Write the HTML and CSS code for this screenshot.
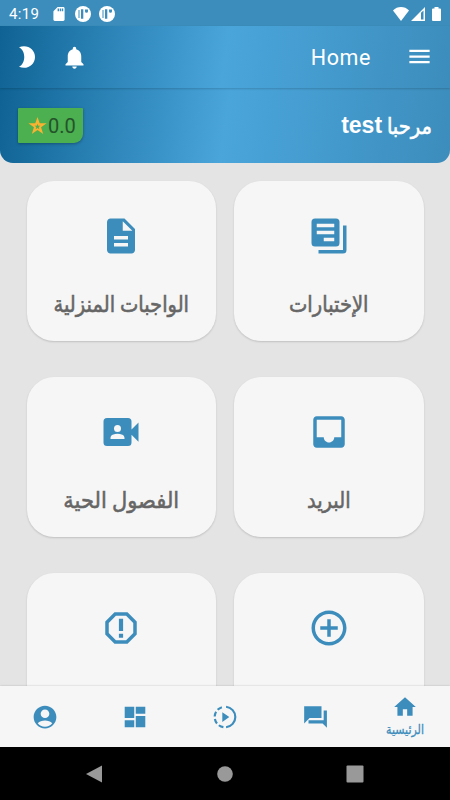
FILE: index.html
```html
<!DOCTYPE html>
<html lang="ar">
<head>
  <meta charset="UTF-8" />
  <meta name="viewport" content="width=device-width, initial-scale=1" />
  <title>Home</title>
  <link rel="stylesheet" href="styles.css">
</head>
<body>

  <div class="statusbar">
    <span class="clock">4:19</span>
    <svg class="sd" viewBox="4 2 16 20"><path d="M18 2h-8L4.020 8 4 20c0 1.100.9 2 2 2h12c1.100 0 2-.9 2-2V4c0-1.100-.9-2-2-2zm-6 6h-2V4h2v4zm3 0h-2V4h2v4zm3 0h-2V4h2v4z"/></svg>
    <svg class="notif" viewBox="0 0 16 16"><circle cx="8" cy="8" r="8"/><path class="cut" d="M3.500 4h1v8h-1zM6 3.200h2.300v9.600H6zM10 3.500h3v1.800q0 1.500-1.500 1.500T10 5.300z"/></svg>
    <svg class="notif" viewBox="0 0 16 16"><circle cx="8" cy="8" r="8"/><path class="cut" d="M3.500 4h1v8h-1zM6 3.200h2.300v9.600H6zM10 3.500h3v1.800q0 1.500-1.500 1.500T10 5.300z"/></svg>
    <div class="signals">
      <svg class="wifi" viewBox="0 0 16 14"><path d="M8 14L0 3.400C2.200 1.200 5 0 8 0s5.800 1.200 8 3.400z"/></svg>
      <svg class="cell" viewBox="0 0 14 14"><path fill-rule="evenodd" d="M14 0v14H0zM10 5.800V12.500h2.500V3.500z"/></svg>
      <svg class="battery" viewBox="0 0 9 14"><path d="M2.500 0h4v1.500H8q1 0 1 1V13q0 1-1 1H1q-1 0-1-1V2.500q0-1 1-1h1.500z"/></svg>
    </div>
  </div>

  <header class="appbar">
    <svg class="moon" viewBox="0 0 16 22"><path d="M0 1.200C8-2.200 16 3 16 11S8 24.200 0 20.800C7 17.500 7 4.500 0 1.200z"/></svg>
    <svg class="bell" viewBox="0 0 24 24"><path d="M12 22c1.100 0 2-.9 2-2h-4c0 1.100.89 2 2 2zm6-6v-5c0-3.070-1.640-5.640-4.500-6.320V4c0-.83-.67-1.500-1.500-1.500s-1.500.67-1.500 1.500v.68C7.630 5.360 6 7.920 6 11v5l-2 2v1h16v-1l-2-2z"/></svg>
    <h1>Home</h1>
    <svg class="menu" viewBox="0 0 24 24"><path d="M3 18h18v-2H3v2zm0-5h18v-2H3v2zm0-7v2h18V6H3z"/></svg>
  </header>

  <section class="welcome">
    <div class="rating">
      <svg viewBox="0 0 24 24"><path fill-rule="evenodd" d="M12 .5l2.800 8.100h8.700l-7 5.100 2.700 8.300L12 17l-7.200 5 2.700-8.300-7-5.100h8.700zM12 9l-.9 2.700H8.300l2.200 1.700-.8 2.700 2.300-1.600 2.300 1.600-.8-2.700 2.200-1.700h-2.800z"/></svg>
      <span>0.0</span>
    </div>
    <p class="greeting" dir="rtl"><span class="hello">مرحبا</span> <b>test</b></p>
  </section>

  <main class="grid" dir="rtl">
    <a class="card">
      <svg viewBox="0 0 24 24"><path fill-rule="evenodd" d="M4 2h12a2 2 0 0 1 2 2v12a2 2 0 0 1-2 2H4a2 2 0 0 1-2-2V4a2 2 0 0 1 2-2zM5 5v2h10V5zM5 9v2h10V9zM9 13v2h6v-2zM20 6h2v14a2 2 0 0 1-2 2H6v-2h14z"/></svg>
      <span class="label">الإختبارات</span>
    </a>
    <a class="card">
      <svg viewBox="0 0 24 24"><path d="M14 2H6c-1.100 0-1.990.9-1.990 2L4 20c0 1.100.89 2 1.990 2H18c1.100 0 2-.9 2-2V8l-6-6zm2 16H8v-2h8v2zm0-4H8v-2h8v2zm-3-5V3.500L18.500 9H13z"/></svg>
      <span class="label">الواجبات المنزلية</span>
    </a>
    <a class="card">
      <svg viewBox="0 0 24 24"><path d="M19 3H4.990C3.880 3 3.010 3.890 3.010 5L3 19c0 1.100.88 2 1.990 2H19c1.100 0 2-.9 2-2V5c0-1.110-.9-2-2-2zm0 12h-4c0 1.660-1.350 3-3 3s-3-1.340-3-3H4.990V5H19v10z"/></svg>
      <span class="label">البريد</span>
    </a>
    <a class="card">
      <svg viewBox="0 0 24 24"><path fill-rule="evenodd" d="M18 10.500V6a2 2 0 0 0-2-2H4a2 2 0 0 0-2 2v12a2 2 0 0 0 2 2h12a2 2 0 0 0 2-2v-4.500l4 4v-11zM10 8a2 2 0 1 1 0 4 2 2 0 0 1 0-4zM14 16H6v-.57c0-.81.48-1.530 1.220-1.850a6.950 6.950 0 0 1 5.560 0c.74.32 1.220 1.040 1.220 1.850z"/></svg>
      <span class="label wide">الفصول الحية</span>
    </a>
    <a class="card">
      <svg viewBox="0 0 24 24"><path d="M13 7h-2v4H7v2h4v4h2v-4h4v-2h-4V7zm-1-5C6.480 2 2 6.480 2 12s4.480 10 10 10 10-4.480 10-10S17.520 2 12 2zm0 18c-4.410 0-8-3.590-8-8s3.590-8 8-8 8 3.590 8 8-3.590 8-8 8z"/></svg>
    </a>
    <a class="card">
      <svg viewBox="0 0 24 24"><path d="M15.730 3H8.270L3 8.270v7.460L8.270 21h7.460L21 15.730V8.270L15.730 3zM19 14.900L14.900 19H9.100L5 14.900V9.100L9.100 5h5.800L19 9.100v5.800zM10.800 15.300h2.400v2.300h-2.400zM10.800 6.700h2.400v7h-2.400z"/></svg>
    </a>
  </main>

  <nav class="tabs" dir="rtl">
    <a class="active">
      <svg viewBox="0 0 24 24"><path d="M10 20v-6h4v6h5v-8h3L12 3 2 12h3v8z"/></svg>
      <span>الرئيسية</span>
    </a>
    <a><svg viewBox="0 0 24 24"><path d="M23 6h-3v9H6v3h13l4 4zM18 13V2H2v16l5-5z"/></svg></a>
    <a><svg viewBox="0 0 24 24"><path d="M9.500 7.500v9l6.500-4.500z"/><path class="ring" d="M13 2.550a9.500 9.500 0 0 1 0 18.900"/><path class="ring" stroke-dasharray="4.600 2.300" stroke-dashoffset="-.5" d="M11 21.450a9.500 9.500 0 0 1 0-18.900"/></svg></a>
    <a><svg viewBox="0 0 24 24"><path d="M2.500 13h8.800V2.500H2.500zm0 8.500h8.800v-6.500H2.500zm10.200 0h8.800V11h-8.800zm0-19V9h8.800V2.500z"/></svg></a>
    <a><svg viewBox="0 0 24 24"><path d="M12 1.500C6.200 1.500 1.500 6.200 1.500 12S6.200 22.500 12 22.500 22.500 17.800 22.500 12 17.800 1.500 12 1.500zM12 5a4 4 0 1 1 0 8 4 4 0 0 1 0-8zm0 16c-2.800 0-5.200-1.300-6.700-3.300C6.700 16.200 9.400 15.300 12 15.300s5.300.9 6.700 2.400C17.200 19.700 14.800 21 12 21z" fill-rule="evenodd"/></svg></a>
  </nav>

  <div class="sysnav">
    <svg viewBox="0 0 18 18"><path d="M0 9L16 .5V17.500z"/></svg>
    <svg viewBox="0 0 18 18"><circle cx="9" cy="9" r="7.800"/></svg>
    <svg viewBox="0 0 18 18"><rect x=".5" y=".5" width="17" height="17" rx="1"/></svg>
  </div>

</body>
</html>
```

FILE: styles.css
```css
* {
  box-sizing: border-box;
}
body {
  margin: 0;
  height: 800px;
  overflow: hidden;
  display: flex;
  flex-direction: column;
  background: #e4e4e4;
  font-family: Roboto, "DejaVu Sans", sans-serif;
}
svg {
  display: block;
  flex: none;
  fill: currentColor;
}

/* status bar */
.statusbar {
  flex: none;
  height: 26px;
  padding: 1px 9px 0;
  display: flex;
  align-items: center;
  background: #3c8dbc;
  color: #fff;
}
.clock {
  width: 44px;
  font-size: 15px;
  letter-spacing: 0.3px;
}
.sd {
  width: 12px;
  height: 14px;
  margin-right: 10px;
}
.notif {
  width: 16px;
  height: 16px;
  margin-right: 8px;
}
.cut {
  fill: #3c8dbc;
}
.signals {
  margin-left: auto;
  display: flex;
}
.wifi {
  width: 16px;
  height: 14px;
}
.cell {
  width: 14px;
  height: 14px;
  margin: 0 7px 0 2px;
}
.battery {
  width: 9px;
  height: 14px;
}

/* top area */
.appbar,
.welcome {
  flex: none;
  display: flex;
  align-items: center;
  background: linear-gradient(98deg, #0f6394 0%, #4aa5db 50%, #3c8dbc 100%);
  color: #fff;
}
.appbar {
  height: 62px;
  padding: 0 17px 0 19px;
  z-index: 1;
  box-shadow: 0 1px 2px rgba(0, 0, 0, 0.18);
}
.moon {
  width: 16px;
  height: 22px;
}
.bell {
  width: 27px;
  height: 27px;
  margin-left: 26px;
}
.appbar h1 {
  margin: 0 35px 0 auto;
  font-size: 21.5px;
  font-weight: 400;
  letter-spacing: 0.6px;
}
.menu {
  width: 27px;
  height: 27px;
  margin-bottom: 1px;
}
.welcome {
  height: 75px;
  padding: 0 18px;
  justify-content: space-between;
  border-radius: 0 0 13px 13px;
}
.rating {
  width: 65px;
  height: 35px;
  padding-left: 10px;
  display: flex;
  align-items: center;
  gap: 1px;
  background: #4caf50;
  border-radius: 1px 1px 9px 1px;
  color: #24532a;
  font-size: 20px;
  box-shadow: 0 1px 3px rgba(0, 0, 0, 0.3);
}
.rating svg {
  width: 19px;
  height: 20px;
  fill: #fbb231;
}
.greeting {
  margin: 0;
  font-size: 19.5px;
  white-space: nowrap;
}
.hello {
  display: inline-block;
  transform: scaleY(1.15);
  -webkit-text-stroke: 0.5px currentColor;
}
.greeting b {
  font-family: "Liberation Sans", sans-serif;
  font-size: 23px;
}

/* home cards */
.grid {
  flex: 1;
  min-height: 0;
  overflow: hidden;
  padding: 18px 26.5px 0;
  display: grid;
  grid-template-columns: 189.5px 189.5px;
  grid-auto-rows: 160px;
  column-gap: 18px;
  row-gap: 36px;
}
.card {
  padding-top: 34px;
  display: flex;
  flex-direction: column;
  align-items: center;
  background: #f6f6f6;
  border-radius: 27px;
  box-shadow: 0 1px 2px rgba(0, 0, 0, 0.16);
  color: #3c8dbc;
}
.card svg {
  width: 42px;
  height: 42px;
}
.label {
  margin-top: 32px;
  color: #666;
  font-size: 19.5px;
  line-height: 32px;
  white-space: nowrap;
  transform: scaleY(1.15);
  -webkit-text-stroke: 0.5px currentColor;
}
.label.wide {
  font-size: 21px;
  transform: scaleY(1.07);
}

/* bottom tabs */
.tabs {
  flex: none;
  height: 61px;
  display: grid;
  grid-template-columns: repeat(5, 1fr);
  background: #f6f6f6;
  color: #3c8dbc;
  box-shadow: 0 0 2px rgba(0, 0, 0, 0.2);
}
.tabs a {
  display: flex;
  flex-direction: column;
  align-items: center;
  justify-content: center;
}
.tabs svg {
  width: 26px;
  height: 26px;
}
.tabs .active {
  padding-top: 3px;
}
.tabs span {
  font-size: 11px;
  line-height: 22px;
  transform: scaleY(1.15);
  -webkit-text-stroke: 0.25px currentColor;
}
.ring {
  fill: none;
  stroke: currentColor;
  stroke-width: 2;
}

.sysnav {
  flex: none;
  height: 53px;
  padding: 0 30px;
  display: grid;
  grid-template-columns: repeat(3, 1fr);
  align-items: center;
  justify-items: center;
  background: #000;
  color: #999;
}
.sysnav svg {
  width: 18px;
  height: 18px;
}
```
